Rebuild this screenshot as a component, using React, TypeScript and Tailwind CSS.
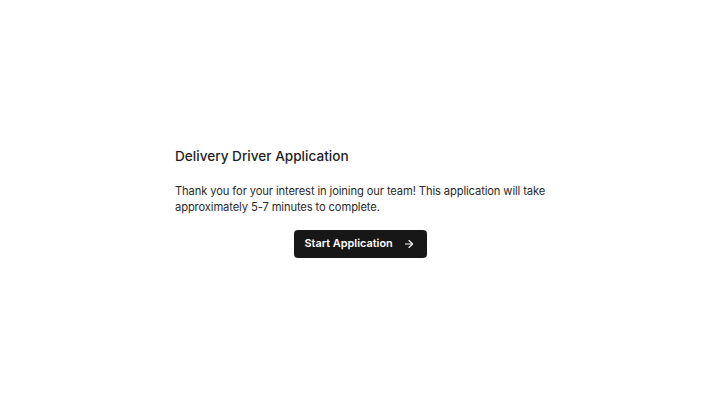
import { ArrowRight } from 'lucide-react'

export default function App() {
  return (
    <div
      className="min-h-screen bg-white flex items-center justify-center pb-[2px]"
      style={{ fontFamily: 'Inter, "Noto Sans", sans-serif' }}
    >
      <div className="w-[370px] flex flex-col">
        <h1 className="text-[13.6px] leading-5 font-medium text-[#1f1f1f]">Delivery Driver Application</h1>
        <p className="mt-[17px] -mr-2 text-[11.2px] leading-4 tracking-[-0.12px] text-[#2a2a2a]">
          Thank you for your interest in joining our team! This application will take approximately 5-7 minutes
          to complete.
        </p>
        <div className="mt-[15px] flex justify-center">
          <button className="h-7 w-[133px] pl-[11px] pr-[12px] rounded bg-[#171717] text-white text-[10.9px] font-semibold flex items-center justify-between">
            Start Application
            <ArrowRight className="w-3 h-3" strokeWidth={2.2} />
          </button>
        </div>
      </div>
    </div>
  )
}
